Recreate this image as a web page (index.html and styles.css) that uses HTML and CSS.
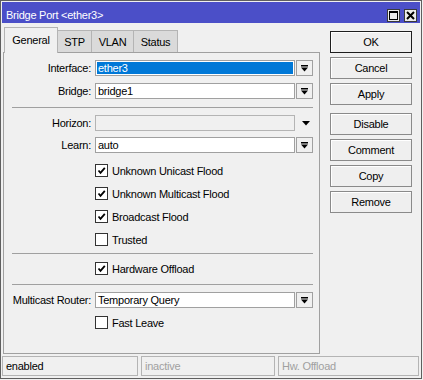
FILE: index.html
```html
<!DOCTYPE html>
<html lang="en">
<head>
  <meta charset="UTF-8" />
  <title>Bridge Port &lt;ether3&gt;</title>
  <link rel="stylesheet" href="styles.css">
</head>
<body>

<div class="window">
  <div class="titlebar">
    <span class="title">Bridge Port &lt;ether3&gt;</span>
    <div class="title-buttons">
      <span class="tbtn">
        <svg width="9" height="9" viewBox="0 0 9 9"><rect x="0.5" y="0.5" width="8" height="8" fill="none" stroke="#000"/><rect x="0" y="0" width="9" height="2" fill="#000"/></svg>
      </span>
      <span class="tbtn">
        <svg width="9" height="9" viewBox="0 0 9 9"><path d="M1 1 L8 8 M8 1 L1 8" stroke="#000" stroke-width="2"/></svg>
      </span>
    </div>
  </div>

  <div class="main">
    <div class="left">
      <div class="tabs">
        <span class="tab active tab-general">General</span>
        <span class="tab tab-stp">STP</span>
        <span class="tab tab-vlan">VLAN</span>
        <span class="tab tab-status">Status</span>
      </div>

      <div class="panel">
        <div class="row">
          <span class="lbl">Interface:</span>
          <div class="field selected"><span class="sel">ether3</span></div>
          <span class="drop"><svg width="7" height="7" viewBox="0 0 7 7"><rect x="0" y="0" width="7" height="1.5" fill="#000"/><polygon points="0,2.5 7,2.5 3.5,6.5" fill="#000"/></svg></span>
        </div>
        <div class="row">
          <span class="lbl">Bridge:</span>
          <div class="field">bridge1</div>
          <span class="drop"><svg width="7" height="7" viewBox="0 0 7 7"><rect x="0" y="0" width="7" height="1.5" fill="#000"/><polygon points="0,2.5 7,2.5 3.5,6.5" fill="#000"/></svg></span>
        </div>

        <div class="sep sep-1"></div>

        <div class="row">
          <span class="lbl">Horizon:</span>
          <div class="field disabled"></div>
          <span class="drop plain"><svg width="8" height="5" viewBox="0 0 8 5"><polygon points="0,0 8,0 4,4.5" fill="#000"/></svg></span>
        </div>
        <div class="row row-learn">
          <span class="lbl">Learn:</span>
          <div class="field">auto</div>
          <span class="drop"><svg width="7" height="7" viewBox="0 0 7 7"><rect x="0" y="0" width="7" height="1.5" fill="#000"/><polygon points="0,2.5 7,2.5 3.5,6.5" fill="#000"/></svg></span>
        </div>

        <div class="checks">
          <div class="check"><span class="box"><svg width="9" height="9" viewBox="0 0 9 9"><path d="M1.5 4.5 L3.5 6.8 L7.8 1.8" fill="none" stroke="#000" stroke-width="1.8"/></svg></span>Unknown Unicast Flood</div>
          <div class="check"><span class="box"><svg width="9" height="9" viewBox="0 0 9 9"><path d="M1.5 4.5 L3.5 6.8 L7.8 1.8" fill="none" stroke="#000" stroke-width="1.8"/></svg></span>Unknown Multicast Flood</div>
          <div class="check"><span class="box"><svg width="9" height="9" viewBox="0 0 9 9"><path d="M1.5 4.5 L3.5 6.8 L7.8 1.8" fill="none" stroke="#000" stroke-width="1.8"/></svg></span>Broadcast Flood</div>
          <div class="check"><span class="box"></span>Trusted</div>
        </div>

        <div class="sep sep-2"></div>

        <div class="check"><span class="box"><svg width="9" height="9" viewBox="0 0 9 9"><path d="M1.5 4.5 L3.5 6.8 L7.8 1.8" fill="none" stroke="#000" stroke-width="1.8"/></svg></span>Hardware Offload</div>

        <div class="sep sep-3"></div>

        <div class="row">
          <span class="lbl">Multicast Router:</span>
          <div class="field">Temporary Query</div>
          <span class="drop"><svg width="7" height="7" viewBox="0 0 7 7"><rect x="0" y="0" width="7" height="1.5" fill="#000"/><polygon points="0,2.5 7,2.5 3.5,6.5" fill="#000"/></svg></span>
        </div>
        <div class="check check-fast"><span class="box"></span>Fast Leave</div>
      </div>
    </div>

    <div class="buttons">
      <span class="btn default">OK</span>
      <span class="btn">Cancel</span>
      <span class="btn">Apply</span>
      <span class="btn group">Disable</span>
      <span class="btn">Comment</span>
      <span class="btn">Copy</span>
      <span class="btn">Remove</span>
    </div>
  </div>

  <div class="statusbar">
    <span class="cell cell-1">enabled</span>
    <span class="cell cell-2 dim">inactive</span>
    <span class="cell cell-3 dim">Hw. Offload</span>
  </div>
</div>

</body>
</html>
```

FILE: styles.css
```css
body {
  margin: 0;
  background: #f0f0f0;
  font-family: "Liberation Sans", Arial, sans-serif;
  font-size: 11px;
  letter-spacing: -0.25px;
  color: #000;
}

.window {
  width: 422px;
  height: 379px;
  box-sizing: border-box;
  border: 1px solid #5f5f5f;
  padding: 1px;
  display: flex;
  flex-direction: column;
  background: #f0f0f0;
}

.titlebar {
  height: 21px;
  background: #4b4fc8;
  color: #fff;
  display: flex;
  align-items: flex-end;
  justify-content: space-between;
  padding: 0 3px 0 4px;
}

.title {
  line-height: 14px;
  margin-bottom: 1px;
}

.title-buttons {
  display: flex;
  gap: 4px;
  margin-bottom: 1px;
}

.tbtn {
  width: 13px;
  height: 13px;
  box-sizing: border-box;
  border: 1px solid #3a3a3a;
  background: #ececec;
  display: flex;
  align-items: center;
  justify-content: center;
}

.main {
  display: flex;
  align-items: flex-start;
}

.left {
  width: 317px;
  margin: 4px 0 0 1px;
}

.tabs {
  height: 25px;
  display: flex;
  align-items: flex-end;
  padding-left: 1px;
}

.tab {
  height: 22px;
  box-sizing: border-box;
  border: 1px solid #b4b4b4;
  border-bottom: none;
  background: #dadada;
  display: flex;
  align-items: center;
  justify-content: center;
  margin-left: -1px;
}

.tab-general { width: 54px; margin-left: 0; }
.tab-stp { width: 35px; }
.tab-vlan { width: 43px; }
.tab-status { width: 45px; }

.tab.active {
  height: 26px;
  margin-bottom: -1px;
  background: #f0f0f0;
  position: relative;
  z-index: 1;
  padding-bottom: 2px;
}

.panel {
  height: 302px;
  box-sizing: border-box;
  border: 1px solid #a0a0a0;
  padding: 7px 6px 0 0;
}

.row {
  display: flex;
  align-items: center;
  height: 16px;
}

.row + .row {
  margin-top: 7px;
}

.row.row-learn {
  margin-top: 6px;
}

.lbl {
  width: 91px;
  box-sizing: border-box;
  padding-right: 4px;
  text-align: right;
  white-space: nowrap;
}

.field {
  flex: 1;
  height: 16px;
  box-sizing: border-box;
  border: 1px solid #a0a0a0;
  background: #fff;
  padding-left: 2px;
  line-height: 14px;
  white-space: nowrap;
}

.field.selected {
  padding: 1px;
}

.field.selected .sel {
  display: block;
  height: 12px;
  line-height: 12px;
  background: #0078d7;
  color: #fff;
  padding-left: 1px;
}

.field.disabled {
  background: #f0f0f0;
  border-color: #b4b4b4;
}

.drop {
  width: 17px;
  height: 16px;
  margin-left: 1px;
  box-sizing: border-box;
  border: 1px solid #a0a0a0;
  background: #f0f0f0;
  display: flex;
  align-items: center;
  justify-content: center;
}

.drop.plain {
  border: none;
  padding-left: 3px;
}

.checks {
  margin-top: 6px;
}

.check {
  height: 23px;
  display: flex;
  align-items: center;
  padding-left: 91px;
}

.check-fast {
  margin-top: 3px;
}

.box {
  width: 13px;
  height: 13px;
  box-sizing: border-box;
  border: 1px solid #333;
  background: #fff;
  margin-right: 4px;
  display: flex;
  align-items: center;
  justify-content: center;
}

.sep {
  height: 1px;
  background: #a0a0a0;
  margin-left: 8px;
}

.sep-1 { margin-top: 8px; margin-bottom: 7px; }
.sep-2 { margin-top: 2px; margin-bottom: 3px; }
.sep-3 { margin-top: 4px; margin-bottom: 7px; }

.buttons {
  width: 82px;
  margin: 8px 0 0 10px;
  display: flex;
  flex-direction: column;
  gap: 4px;
}

.btn {
  height: 22px;
  box-sizing: border-box;
  border: 1px solid #8a8a8a;
  background: #efefef;
  box-shadow: inset 1px 1px #fff;
  display: flex;
  align-items: center;
  justify-content: center;
}

.btn.default {
  border-color: #1e1e1e;
}

.btn.group {
  margin-top: 4px;
}

.statusbar {
  display: flex;
  gap: 3px;
  margin-top: 2px;
  height: 20px;
}

.cell {
  box-sizing: border-box;
  border: 1px solid #b4b4b4;
  padding-left: 3px;
  line-height: 18px;
}

.cell-1 { width: 136px; }
.cell-2 { width: 134px; }
.cell-3 { width: 141px; }

.dim {
  color: #a0a0a0;
}
```
